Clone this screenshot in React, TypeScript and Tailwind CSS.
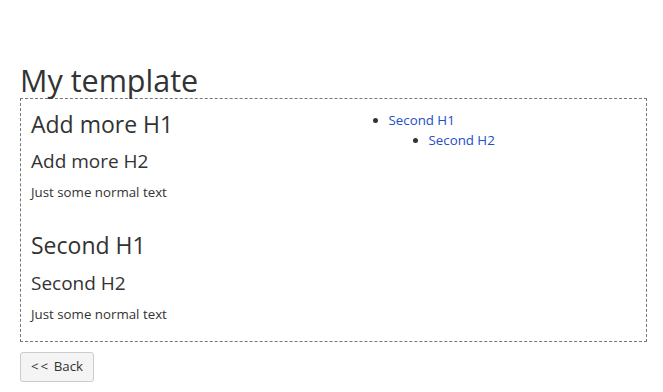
export default function App() {
  return (
    <div className="min-h-screen bg-white pl-5 pr-4 pt-[62px] font-['Segoe_UI','Open_Sans',sans-serif] text-[#333]">
      {/* Page title */}
      <h1 className="text-[30.5px] leading-[36px]">My template</h1>

      {/* Template body */}
      <div className="flex border border-dashed border-[#777]">
        <div className="w-1/2 pl-[10px] pt-[12px] pb-[17px]">
          <h2 className="text-[23px] leading-[26px]">Add more H1</h2>
          <h3 className="mt-[13px] text-[19px] leading-[22px]">Add more H2</h3>
          <p className="mt-[10px] text-[13.3px] leading-[20px]">Just some normal text</p>

          <h2 className="mt-[30px] text-[23px] leading-[26px]">Second H1</h2>
          <h3 className="mt-[14px] text-[19px] leading-[22px]">Second H2</h3>
          <p className="mt-[10px] text-[13.3px] leading-[20px]">Just some normal text</p>
        </div>

        <div className="w-1/2 pt-[11px] pl-[15px]">
          <ul className="list-disc pl-10 text-[13.3px] leading-[20px]">
            <li>
              <a href="#" className="text-[#1c4fc9]">Second H1</a>
              <ul className="list-disc pl-10">
                <li>
                  <a href="#" className="text-[#1c4fc9]">Second H2</a>
                </li>
              </ul>
            </li>
          </ul>
        </div>
      </div>

      <button className="mt-[10px] h-[30px] w-[74px] rounded-[3px] border border-[#ccc] bg-[#f4f4f4] text-[13.3px] text-[#333]">
        <span className="tracking-[2px]">&lt;&lt;</span> Back
      </button>
    </div>
  )
}
